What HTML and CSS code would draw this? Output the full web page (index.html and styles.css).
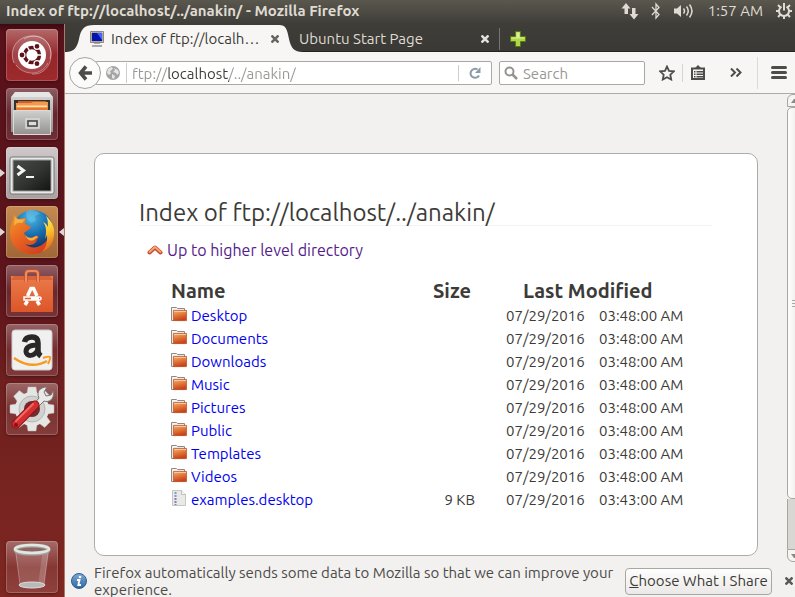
FILE: index.html
```html
<!DOCTYPE html>
<html lang="en">
<head>
<meta charset="utf-8">
<meta name="viewport" content="width=device-width, initial-scale=1">
<title>Index of ftp://localhost/../anakin/</title>
<link rel="stylesheet" href="styles.css">
</head>
<body>
<header class="panel">
  <h1 class="panel-title">Index of ftp://localhost/../anakin/ - Mozilla Firefox</h1>
  <div class="indicators">
    <svg class="ind-net" width="18" height="18" viewBox="0 0 18 18" fill="#dfdbd2"><path d="M5 1 9.5 6.500H7V12H3.500V6.500H.5zM13 17.500 8.500 12H11V6h3.500v6H17.500z"/></svg>
    <svg class="ind-bt" width="10" height="18" viewBox="0 0 10 18" fill="none" stroke="#dfdbd2" stroke-width="1.300"><path d="M1 5 8 12.500 5 16V2L8 5.500 1 13"/></svg>
    <svg class="ind-vol" width="21" height="18" viewBox="0 0 21 18"><path fill="#dfdbd2" d="M1 6.500h3L8 3v12l-4-3.500H1z"/><path fill="none" stroke="#dfdbd2" stroke-width="1.500" d="M10.500 6.500q2 2.500 0 5M13.500 4.500q3.500 4.500 0 9M16.500 2.500q5 6.500 0 13"/></svg>
    <time class="clock">1:57 AM</time>
    <svg class="ind-gear" width="18" height="18" viewBox="0 0 18 18" fill="none" stroke="#dfdbd2"><path stroke-width="2" d="M6.500 4.700a5 5 0 1 0 5 0"/><path stroke-width="2" d="M9 1v7.500M3 3l2.500 2.500M15 3l-2.500 2.500M1 9h3M14 9h3M3 15l2.500-2.500M15 15l-2.500-2.500M9 14v3"/></svg>
  </div>
</header>
<div class="desktop">
  <nav class="launcher" aria-label="Launcher">
    <button class="tile tile-dash" aria-label="Dash">
      <svg width="52" height="52" viewBox="0 0 52 52"><g fill="none" stroke="#fff" stroke-opacity=".4"><path d="M8 34C1 16 17 3 33 8c10 3 14 14 11 22M18 10c14-8 27 1 27 16 0 12-9 20-19 19M42 34C36 47 18 47 10 36"/></g><path fill="#fff" fill-opacity=".13" d="M8 34C1 16 17 3 33 8c10 3 14 14 11 22-3 14-24 20-36 4z"/><circle cx="26" cy="26" r="14" fill="#fff"/><circle cx="26" cy="26" r="7.500" fill="none" stroke="#5d151b" stroke-width="3.500"/><path stroke="#fff" stroke-width="1.500" d="M26 26 38 26M26 26 20 15.500M26 26 20 36.500"/><circle cx="26" cy="26" r="5" fill="#fff"/><g fill="#5d151b" stroke="#fff" stroke-width="1.200"><circle cx="16" cy="26" r="3"/><circle cx="31" cy="17.300" r="3"/><circle cx="31" cy="34.700" r="3"/></g></svg>
    </button>
    <button class="tile tile-files" aria-label="Files">
      <svg width="52" height="52" viewBox="0 0 52 52"><defs><linearGradient id="cab" x2="0" y2="1"><stop stop-color="#d0d0cf"/><stop offset="1" stop-color="#929290"/></linearGradient></defs><path fill="#e5e5e3" d="M9 4h34l4 5v35H5V9z"/><path fill="url(#cab)" d="M5 9h42v35H5z"/><path fill="#333" d="M8 12h36v10H8z"/><path fill="#d65c25" d="M12 13h28v9H12z"/><path fill="#f19a4d" d="M10 15h15l2-1h15v9H10z"/><path fill="#ffe0b0" d="M11 17.500h30v1.500H11z"/><path fill="#e97730" d="M10 20h32v3H10z"/><path fill="url(#cab)" stroke="#dadad9" d="M7.500 22.500h37v24h-37z"/><path fill="#b6b6b4" stroke="#d9d9d8" stroke-width="1.500" d="M20 31h13v9H20z"/><path fill="#ddd" stroke="#444" stroke-width="1.500" d="M22 33h9v5h-9z"/></svg>
    </button>
    <button class="tile tile-terminal running" aria-label="Terminal">
      <svg width="52" height="52" viewBox="0 0 52 52"><defs><linearGradient id="term" x2="1" y2="1"><stop stop-color="#484a48"/><stop offset=".5" stop-color="#343634"/><stop offset="1" stop-color="#121312"/></linearGradient></defs><rect x="4" y="10" width="44" height="37" rx="2" fill="#e8e8e6" stroke="#777"/><rect x="7" y="13" width="38" height="31" fill="url(#term)" stroke="#999"/><path fill="none" stroke="#f4f4f4" stroke-width="3" d="m11.500 19 6 4.500-6 4.500"/><path stroke="#f4f4f4" stroke-width="2" d="M20 30h8"/></svg>
    </button>
    <button class="tile tile-firefox running focused" aria-label="Firefox">
      <svg width="52" height="52" viewBox="0 0 52 52"><defs><radialGradient id="globe" cx=".45" cy=".2" r=".8"><stop stop-color="#4fb6e3"/><stop offset=".5" stop-color="#1972b1"/><stop offset="1" stop-color="#102d66"/></radialGradient><linearGradient id="fox" x2=".8" y2="1"><stop stop-color="#f29b27"/><stop offset=".45" stop-color="#e96623"/><stop offset="1" stop-color="#ce3b1f"/></linearGradient><linearGradient id="tail" x2=".2" y2="1"><stop stop-color="#fff27a"/><stop offset=".5" stop-color="#f9c52e"/><stop offset="1" stop-color="#e66a1f"/></linearGradient></defs><circle cx="27" cy="24" r="20" fill="url(#globe)"/><path fill="#70c8e9" fill-opacity=".45" d="M20 6c5-4 12-1 14 2l-5 2 1 5-5 2-4-4z"/><path fill="url(#fox)" d="M8 8c1 3 3 5 5 5l7-1-1 6 5 2c2 1 0 3-2 4l-4 3c1 5 7 6 11 3 3-1 5 1 2 3-1 6-7 7-12 5 8 7 18 2 22-4 3-7 2-12 0-18 4 4 7 9 6 16-1 10-10 16-21 16C13 48 4 39 4 27c0-6 1-10 3-13z"/><path fill="url(#tail)" d="M40 10c7 6 9 13 8 20-1 8-5 13-12 16 6-7 5-12 5-17l-2 4c2-8 1-14-2-17 3 1 4 3 5 5 0-4 0-7-2-11z"/><path fill="#f7b142" d="M9 10c1 4 5 4 10 3l-3 4c-4-1-6 0-8 3zM19 28c2 5 7 5 11 2l2 1-3 2c-3 3-8 2-10-5z"/></svg>
    </button>
    <button class="tile tile-software" aria-label="Ubuntu Software">
      <svg width="52" height="52" viewBox="0 0 52 52"><defs><linearGradient id="bag" x2="0" y2="1"><stop stop-color="#eb7b49"/><stop offset="1" stop-color="#dc5629"/></linearGradient></defs><path fill="url(#bag)" d="M5 11h42v36H5z"/><path fill="#d7643b" d="M5 15l3-4h36l3 4z"/><path fill="none" stroke="#c5542c" stroke-width="3.500" d="M20 17V9q0-3 3-3h6q3 0 3 3v8"/><path fill="none" stroke="#f08a61" stroke-width="2" d="M20 17V9q0-3 3-3h6q3 0 3 3v8"/><path fill="none" stroke="#fff" stroke-width="3.500" d="M19 40l2.500-4M21.500 31 25 23.500h2.500L31 31M31 36l2.500 4"/><path fill="none" stroke="#fff" stroke-width="1.500" d="M18 32h15q2 0 2 1.500T33 35H18z"/><path fill="#fff" d="M25 32h8v3h-8z"/></svg>
    </button>
    <button class="tile tile-amazon" aria-label="Amazon">
      <svg width="52" height="52" viewBox="0 0 52 52"><rect x="6" y="6" width="40" height="40" rx="3" fill="#f1f0f0" stroke="#ccc"/><path fill="none" stroke="#292827" stroke-width="5.500" d="M18.500 18q1-5 7.500-5 6 0 6 6v8q0 3 3 5"/><path fill="none" stroke="#292827" stroke-width="5" d="M32 21q-12 0-12 6.500c0 5 8 6 12-2"/><path fill="none" stroke="#f79b1c" stroke-width="2.500" d="M8 34q17 12 33 3"/><path fill="none" stroke="#f79b1c" stroke-width="2" d="M37 34q6-2 7-1t-2 7"/></svg>
    </button>
    <button class="tile tile-settings" aria-label="System Settings">
      <svg width="52" height="52" viewBox="0 0 52 52"><g transform="translate(26 26)"><g fill="#e5e5e4" stroke="#b8b8b6" stroke-width=".5"><path d="M-5-16-4-22H4l1 6v32l-1 6h-8l-1-6z"/><path transform="rotate(45)" d="M-5-16-4-22H4l1 6v32l-1 6h-8l-1-6z"/><path transform="rotate(90)" d="M-5-16-4-22H4l1 6v32l-1 6h-8l-1-6z"/><path transform="rotate(135)" d="M-5-16-4-22H4l1 6v32l-1 6h-8l-1-6z"/></g><circle r="17" fill="#e5e5e4"/><circle r="13" fill="#d1d1d0" stroke="#b5b5b4"/><circle r="8" fill="#702c31"/></g><path fill="#e9e9e7" stroke="#777" d="m27 22 6-7c-3-6 1-11 8-11l-3 5 2 4 5-1 2-4c2 8-4 12-9 10l-7 7z"/><path stroke="#8c1115" stroke-width="9" stroke-linecap="round" d="M10 41 29 22"/><path stroke="#d62d30" stroke-width="7" stroke-linecap="round" d="M10 41 29 22"/><path stroke="#ef6965" stroke-width="2" stroke-linecap="round" d="M10 38 27 21"/><circle cx="10" cy="42" r="2" fill="#861417"/></svg>
    </button>
    <button class="tile tile-trash" aria-label="Trash">
      <svg width="52" height="52" viewBox="0 0 52 52"><path fill="#fff" fill-opacity=".15" d="M9 10h34l-5 34q-12 5-24 0z"/><path fill="#fff" fill-opacity=".15" d="m36 14 6-2-4 32-6 1z"/><path stroke="#fff" stroke-opacity=".25" d="m10 12 4 32M42 12l-4 32"/><ellipse cx="26" cy="44" rx="13" ry="3" fill="#b9bab8" stroke="#ddd"/><ellipse cx="26" cy="8.500" rx="16.500" ry="4" fill="#8d6664" stroke="#a5a8a4" stroke-width="4"/><ellipse cx="26" cy="8" rx="17" ry="4" fill="none" stroke="#e4e6e2" stroke-width="2.500"/></svg>
    </button>
  </nav>
  <main class="window">
    <div class="tabs">
      <div class="tab active">
        <svg width="30" height="28" viewBox="0 0 30 28"><path fill="#f7f6f5" d="M0 28C9 28 12 24 14 15 16 5 19 1 29 1H30V28z"/></svg>
        <div class="tab-body">
          <svg width="16" height="16" viewBox="0 0 16 16"><path fill="#d4d2c8" stroke="#888" d="M1.500.5h13v11h-13z"/><path fill="#0714b5" stroke="#223" stroke-width=".5" d="M3 2h10v8H3z"/><path fill="#4362ff" d="M8 2h5v7z"/><path fill="#aaa" d="M5 12h6v1H5zM3 14h10v2H3z"/></svg>
          <span class="tab-title">Index of ftp://localh…</span>
          <button class="close" aria-label="Close tab"><svg width="8" height="8" viewBox="0 0 8 8"><path stroke="#66645f" stroke-width="2.500" d="m.5.500 7 7M7.500.5l-7 7"/></svg></button>
        </div>
        <svg width="24" height="28" viewBox="6 0 24 28"><path fill="#f7f6f5" d="M30 28C21 28 18 24 16 15 14 5 13 1 6 1V28z"/></svg>
      </div>
      <div class="tab idle">
        <span class="tab-title">Ubuntu Start Page</span>
        <button class="close" aria-label="Close tab"><svg width="8" height="8" viewBox="0 0 8 8"><path stroke="#e4e1dc" stroke-width="2.500" d="m.5.500 7 7M7.500.5l-7 7"/></svg></button>
      </div>
      <button class="new-tab" aria-label="New tab"><svg width="16" height="16" viewBox="0 0 16 16"><path fill="#b4d548" stroke="#4f8012" d="M5.500.5h5v5h5v5h-5v5h-5v-5h-5v-5h5z"/><path fill="#dcee9b" d="M6.500 1.500h3v5h5v1h-13v-1h5z"/></svg></button>
    </div>
    <div class="toolbar">
      <button class="back" aria-label="Back"><svg width="14" height="16" viewBox="0 0 14 16"><path fill="none" stroke="#4d4c49" stroke-width="3.500" d="M8 1.500 2.500 8 8 14.500M2.500 8H14"/></svg></button>
      <div class="urlbar">
        <svg width="14" height="14" viewBox="0 0 14 14"><circle cx="7" cy="7" r="7" fill="#a5a5a4"/><path fill="#e5e5e5" d="m2 3 3-2 2 1-1 2-2 1 1 2-2 2-2-2zM8 2l4 2 1 3-2 2-1-2-3-1 2-2zM6 8l3 2-1 3-2-1z"/></svg>
        <input class="url" aria-label="Address" value="ftp://localhost/../anakin/">
        <button class="reload" aria-label="Reload"><svg width="12" height="12" viewBox="0 0 12 12"><path fill="none" stroke="#8c9aa8" stroke-width="2" d="M10 8.500A4.500 4.500 0 1 1 8.500 2.500"/><path fill="#8c9aa8" d="M11.500 0v6H6z"/></svg></button>
      </div>
      <label class="search">
        <svg width="14" height="14" viewBox="0 0 14 14"><circle cx="5.500" cy="5.500" r="4" fill="none" stroke="#94938f" stroke-width="2"/><path stroke="#94938f" stroke-width="2.500" d="m8.500 8.500 4.500 4.500"/></svg>
        <input aria-label="Search" placeholder="Search">
      </label>
      <button class="tool star" aria-label="Bookmark"><svg width="16" height="16" viewBox="0 0 16 16"><path fill="none" stroke="#4d4c49" stroke-width="1.800" d="m8 1.500 2 4.400 4.800.5-3.500 3.300.9 4.800L8 12.200 3.800 14.500l.9-4.800L1.200 6.400 6 5.900z"/></svg></button>
      <button class="tool list" aria-label="Bookmarks menu"><svg width="14" height="16" viewBox="0 0 14 16"><path fill="none" stroke="#4d4c49" stroke-width="2" d="M1 3.500h12V14H1z"/><path fill="#4d4c49" d="M4 3 7 0l3 3zM3 6h1.500v1.500H3zM3 8.500h1.500V10H3zM3 11h1.500v1.500H3zM5.500 6H12v1.500H5.500zM5.500 8.500H12V10H5.500zM5.500 11H12v1.500H5.500z"/></svg></button>
      <button class="tool more" aria-label="More tools"><svg width="12" height="9" viewBox="0 0 12 9"><path fill="none" stroke="#4d4c49" stroke-width="2" d="M1 .5 5 4.500 1 8.500M6.500.5l4 4-4 4"/></svg></button>
      <button class="tool menu" aria-label="Open menu"><svg width="16" height="13" viewBox="0 0 16 13"><path stroke="#4d4c49" stroke-width="3" stroke-linecap="round" d="M1.500 1.500h13M1.500 6.500h13M1.500 11.500h13"/></svg></button>
    </div>
    <div class="viewport">
      <div class="page">
        <section class="card">
          <h2>Index of ftp://localhost/../anakin/</h2>
          <p class="up"><a href="#up"><svg width="16" height="12" viewBox="0 0 16 12"><path fill="none" stroke="#c9482a" stroke-width="4" stroke-linecap="round" stroke-linejoin="round" d="m2.500 8.500 5.500-5 5.500 5"/><path fill="none" stroke="#f3a676" stroke-width="1.800" stroke-linecap="round" stroke-linejoin="round" d="m2.500 8 5.500-5 5.500 5"/></svg>Up to higher level directory</a></p>
          <table>
            <thead><tr><th class="name">Name</th><th class="size">Size</th><th colspan="2" class="modified">Last Modified</th></tr></thead>
            <tbody>
              <tr><td><a href="#Desktop" class="dir"><svg><use href="#folder"/></svg>Desktop</a></td><td></td><td class="date">07/29/2016</td><td>03:48:00 AM</td></tr>
              <tr><td><a href="#Documents" class="dir"><svg><use href="#folder"/></svg>Documents</a></td><td></td><td class="date">07/29/2016</td><td>03:48:00 AM</td></tr>
              <tr><td><a href="#Downloads" class="dir"><svg><use href="#folder"/></svg>Downloads</a></td><td></td><td class="date">07/29/2016</td><td>03:48:00 AM</td></tr>
              <tr><td><a href="#Music" class="dir"><svg><use href="#folder"/></svg>Music</a></td><td></td><td class="date">07/29/2016</td><td>03:48:00 AM</td></tr>
              <tr><td><a href="#Pictures" class="dir"><svg><use href="#folder"/></svg>Pictures</a></td><td></td><td class="date">07/29/2016</td><td>03:48:00 AM</td></tr>
              <tr><td><a href="#Public" class="dir"><svg><use href="#folder"/></svg>Public</a></td><td></td><td class="date">07/29/2016</td><td>03:48:00 AM</td></tr>
              <tr><td><a href="#Templates" class="dir"><svg><use href="#folder"/></svg>Templates</a></td><td></td><td class="date">07/29/2016</td><td>03:48:00 AM</td></tr>
              <tr><td><a href="#Videos" class="dir"><svg><use href="#folder"/></svg>Videos</a></td><td></td><td class="date">07/29/2016</td><td>03:48:00 AM</td></tr>
              <tr><td><a href="#examples.desktop" class="dir"><svg><use href="#file"/></svg>examples.desktop</a></td><td class="bytes">9 KB</td><td class="date">07/29/2016</td><td>03:43:00 AM</td></tr>
            </tbody>
          </table>
        </section>
      </div>
      <div class="scrollbar" aria-hidden="true">
        <span class="arrow arrow-up"></span>
        <span class="thumb"><i></i><i></i><i></i></span>
        <span class="trough"></span>
        <span class="arrow arrow-down"></span>
      </div>
    </div>
    <footer class="notice">
      <svg width="16" height="16" viewBox="0 0 16 16"><defs><linearGradient id="blue" x2="0" y2="1"><stop stop-color="#7ea9d3"/><stop offset="1" stop-color="#2f66a3"/></linearGradient></defs><circle cx="8" cy="8" r="7.500" fill="url(#blue)" stroke="#2d5d92"/><circle cx="9" cy="4" r="1.300" fill="#fff"/><path fill="none" stroke="#fff" stroke-width="1.800" d="M6 7h2.500L7.300 12H10"/></svg>
      <p>Firefox automatically sends some data to Mozilla so that we can improve your experience.</p>
      <button class="choose"><u>C</u>hoose What I Share</button>
      <button class="close" aria-label="Dismiss"><svg width="8" height="8" viewBox="0 0 8 8"><path stroke="#5a5955" stroke-width="2.500" d="m.5.500 7 7M7.500.5l-7 7"/></svg></button>
    </footer>
  </main>
</div>
<svg class="sprites" aria-hidden="true">
  <defs><linearGradient id="fold" x2=".3" y2="1"><stop stop-color="#f3b579"/><stop offset=".5" stop-color="#e27a3c"/><stop offset="1" stop-color="#ca431b"/></linearGradient></defs>
  <symbol id="folder" viewBox="0 0 16 16"><path fill="#f6f5f3" stroke="#8c8a86" d="M.5 14.500V1.500h5l1 1h7v12z"/><path fill="url(#fold)" stroke="#c1542a" stroke-width=".8" d="M2.400 4.400h13.200v10.200H2.400z"/><path stroke="#f8c89a" d="M3 5.500h12"/></symbol>
  <symbol id="file" viewBox="0 0 16 16"><path fill="#e9e9e7" stroke="#c6c6c3" d="M1.500.5h9l4 4v11h-13z"/><path fill="#fafafa" stroke="#c0c0bd" d="M10.500.5v4h4"/><path stroke="#7a9fc0" stroke-width="2" stroke-dasharray="2 1" d="M4.500 2v6"/><path stroke="#8c7ab8" stroke-width="2" stroke-dasharray="2 1" d="M4.500 8v7"/></symbol>
</svg>
</body>
</html>
```
FILE: styles.css
```css
* { box-sizing: border-box; }

body {
  margin: 0;
  height: 100vh;
  display: flex;
  flex-direction: column;
  overflow: hidden;
  font: 15px/20px Ubuntu, "Noto Sans", "Open Sans", sans-serif;
  color: #3c3b37;
  background: #f2f1f0;
}

button {
  padding: 0;
  border: 0;
  background: none;
  font: inherit;
  color: inherit;
  display: flex;
  align-items: center;
  justify-content: center;
}

input {
  min-width: 0;
  border: 0;
  padding: 0;
  outline: 0;
  background: none;
  font: inherit;
}

h1, h2, p { margin: 0; }
svg { display: block; flex: none; }
.sprites { position: absolute; width: 0; height: 0; }

/* Top panel */
.panel {
  flex: none;
  height: 24px;
  padding: 0 2px 2px 6px;
  display: flex;
  align-items: center;
  justify-content: space-between;
  background: linear-gradient(#5a574e, #3e3d38);
  color: #dfdbd2;
}
.panel-title { font-size: 15px; line-height: 20px; font-weight: 700; }
.indicators { display: flex; align-items: center; }
.ind-bt { margin-left: 12px; }
.ind-vol { margin-left: 12px; }
.clock { margin: 0 12px 0 14px; }

.desktop { flex: 1; min-height: 0; display: flex; }

/* Launcher */
.launcher {
  flex: none;
  width: 65px;
  padding: 5px 6px 4px;
  display: flex;
  flex-direction: column;
  gap: 7px;
  border-right: 1px solid #ae7970;
  background: linear-gradient(#3c0a10, #59121a 8px, #5d141b 45%, #70201f 65%, #7f2722);
}
.tile {
  position: relative;
  flex: none;
  width: 52px;
  height: 52px;
  border-radius: 4px;
  box-shadow: inset 0 0 0 1px rgba(255, 255, 255, .2), 0 1px 3px rgba(0, 0, 0, .35);
  background: linear-gradient(rgba(255, 255, 255, .32), rgba(255, 255, 255, .08) 50%, rgba(255, 255, 255, .12));
}
.tile-dash { background: linear-gradient(#b36a6a, #94262b 50%, #9e2a2c); }
.tile-terminal { background: linear-gradient(#cfc9cb, #a89fa1); }
.tile-firefox { background: linear-gradient(#c68b52, #a06635); }
.tile-trash { margin-top: auto; }
.running::before,
.focused::after {
  content: "";
  position: absolute;
  top: 22px;
  border: 4px solid transparent;
}
.running::before { left: -6px; border-left: 5px solid #dcd6d6; border-right: 0; }
.focused::after { right: -6px; border-right: 5px solid #dcd6d6; border-left: 0; }

/* Browser window */
.window { flex: 1; min-width: 0; display: flex; flex-direction: column; }
.tabs {
  flex: none;
  height: 28px;
  display: flex;
  background: linear-gradient(#3e3d38, #3a3935);
  box-shadow: inset 0 -1px #24231f;
}
.tab { display: flex; align-items: center; }
.tab.active { z-index: 1; margin-right: -4px; }
.tab-body {
  height: 27px;
  margin-top: 1px;
  width: 184px;
  display: flex;
  align-items: center;
  background: #f7f6f5;
}
.tab-body > svg { margin: 0 6px 0 -6px; }
.tab-title { flex: 1; white-space: nowrap; }
.idle { width: 200px; padding: 2px 10px 0 0; color: #dfdbd2; }
.close { width: 8px; height: 20px; }
.new-tab {
  width: 36px;
  margin: 4px 0 2px;
  border-left: 1px solid #77756f;
}

.toolbar {
  flex: none;
  height: 42px;
  padding: 0 8px 0 4px;
  display: flex;
  align-items: center;
  border-bottom: 1px solid #aeaca8;
  background: #f7f6f5;
}
.back {
  z-index: 1;
  flex: none;
  width: 32px;
  height: 32px;
  border: 1px solid #a6a39f;
  border-radius: 50%;
  background: #fbfbfa;
}
.urlbar, .search {
  display: flex;
  align-items: center;
  height: 24px;
  border: 1px solid #aba8a3;
  border-radius: 2px;
  background: #fff;
}
.urlbar { flex: 1; margin-left: -6px; padding-left: 10px; }
.urlbar input, .search input { height: 20px; padding-top: 2px; }
.url {
  flex: 1;
  margin-left: 6px;
  padding-left: 5px;
  border-left: 1px solid #d0cecb;
  color: transparent;
  background: linear-gradient(90deg, #999793 41px, #3c3b37 41px 102px, #999793 102px) text;
}
.reload { width: 33px; height: 16px; border-left: 1px solid #d0cecb; }
.search { width: 146px; margin: 0 14px 0 7px; padding-left: 4px; }
.search input { flex: 1; margin-left: 5px; }
.search input::placeholder { color: #999793; opacity: 1; }
.tool { flex: none; height: 32px; }
.star { width: 23px; padding-right: 7px; }
.list { height: 18px; width: 31px; border-left: 1px solid #d6d4d1; }
.more { margin-left: 17px; width: 12px; }
.menu { margin-left: 15px; padding-left: 13px; border-left: 1px solid #dddbd8; }

/* Directory listing */
.viewport { flex: 1; min-height: 0; display: flex; }
.page { flex: 1; min-width: 0; padding: 59px 29px 6px; overflow: hidden; }
.card {
  min-height: 100%;
  padding: 46px 45px 36px 44px;
  border: 1px solid #aeaca8;
  border-radius: 10px;
  background: #fff;
}
.card h2 {
  border-bottom: 1px solid #f4f3f2;
  font-size: 24px;
  line-height: 25px;
  font-weight: 400;
}
.up { margin: 14px 0 0 8px; font-size: 16px; }
.up a { display: flex; align-items: center; gap: 4px; color: #551a8b; text-decoration: none; }
table { margin: 19px 0 0 32px; border-collapse: collapse; }
th, td { padding: 0; text-align: left; white-space: nowrap; line-height: 23px; }
th { padding-bottom: 1px; font-size: 20px; line-height: 24px; }
.name { width: 242px; }
.size { width: 78px; text-align: center; }
.modified { padding-left: 32px; }
.bytes { padding-right: 16px; text-align: right; }
.date { padding-left: 15px; width: 108px; }
.dir { display: flex; align-items: center; gap: 4px; color: #0000ee; text-decoration: none; }
.dir svg { width: 16px; height: 16px; margin-bottom: 3px; }

.scrollbar {
  flex: none;
  width: 8px;
  overflow: hidden;
  display: flex;
  flex-direction: column;
}
.scrollbar > * { flex: none; width: 14px; border: 1px solid #a9a6a1; }
.arrow { height: 13px; background: #f5f4f3; }
.arrow::before { content: ""; display: block; margin: 4px 0 0 3px; width: 6px; border: 3px solid transparent; }
.arrow-up { border-radius: 6px 6px 0 0; }
.arrow-up::before { border-top: 0; border-bottom: 4px solid #8b8984; }
.arrow-down { border-radius: 0 0 6px 6px; }
.arrow-down::before { border-bottom: 0; border-top: 4px solid #8b8984; }
.scrollbar .thumb {
  flex: 1;
  border-radius: 5px;
  display: flex;
  flex-direction: column;
  justify-content: center;
  gap: 2px;
  padding-left: 4px;
  background: linear-gradient(90deg, #fdfdfd, #eceae8);
}
.thumb i { height: 1px; background: #a9a6a1; }
.scrollbar .trough { height: 50px; border-width: 0 1px; background: #d9d7d4; }

/* Notification bar */
.notice {
  flex: none;
  height: 35px;
  padding: 3px 2px 0 6px;
  display: flex;
  align-items: center;
  background: #f2f1f0;
}
.notice p { flex: 1; margin: 0 10px 0 7px; line-height: 17px; color: #4c4b48; }
.choose {
  flex: none;
  width: 147px;
  height: 27px;
  margin-right: 13px;
  border: 1px solid #aaa7a3;
  border-radius: 4px;
  background: linear-gradient(#fefefe, #ebe9e7);
  white-space: nowrap;
}
```
